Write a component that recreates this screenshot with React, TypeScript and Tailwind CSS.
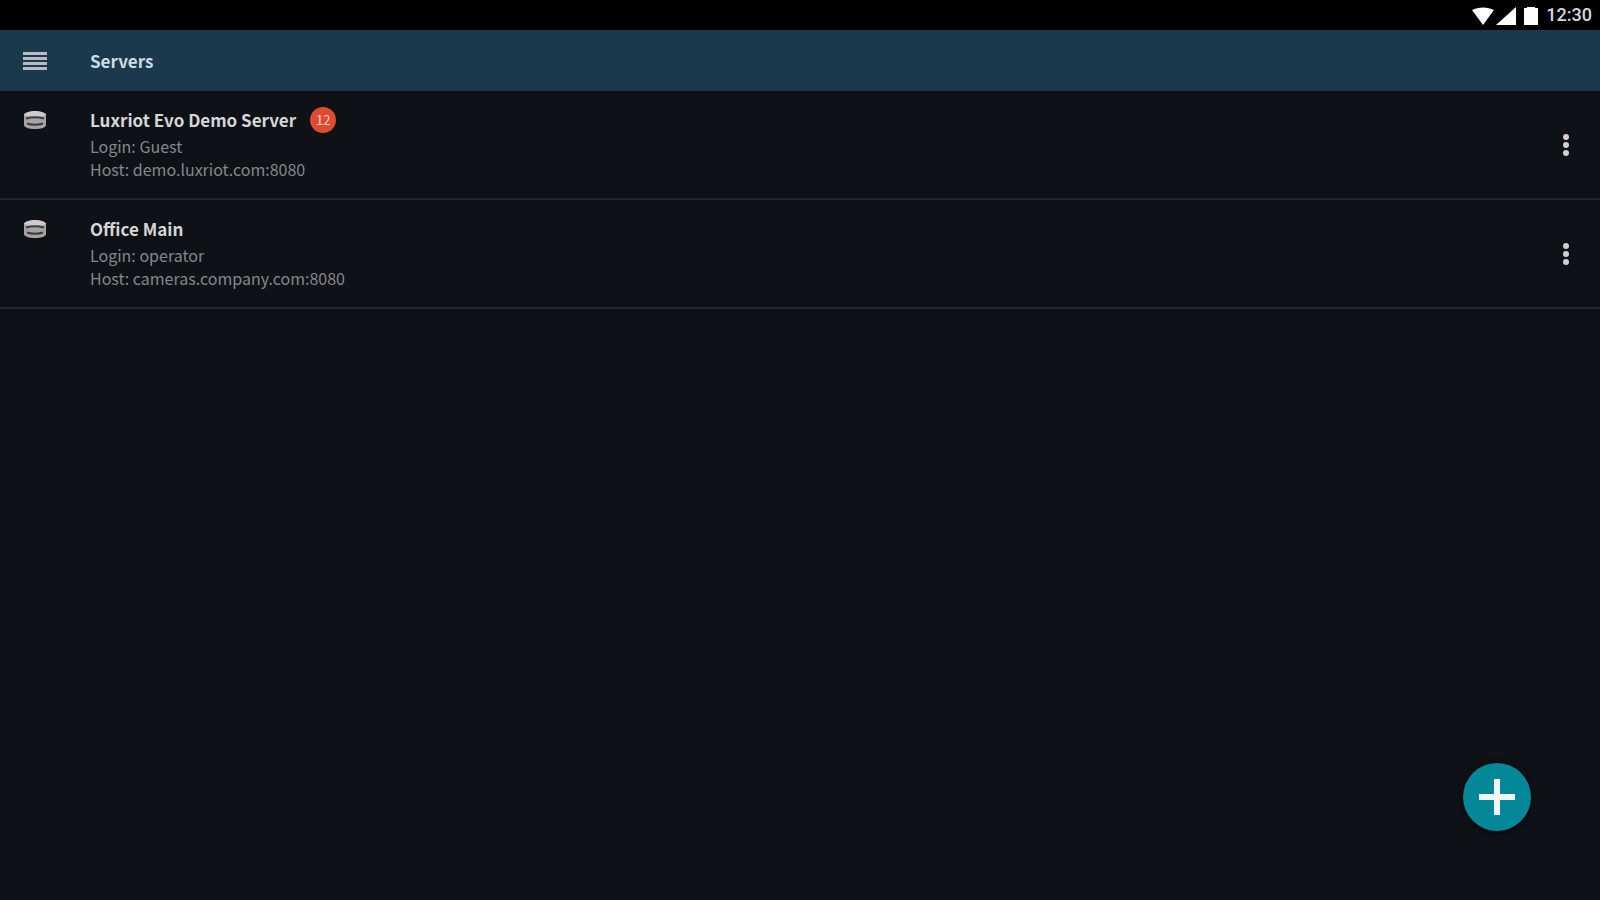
interface Server {
    id: number;
    name: string;
    login: string;
    host: string;
    alerts?: number;
}

const servers: Server[] = [
    { id: 1, name: "Luxriot Evo Demo Server", login: "Guest", host: "demo.luxriot.com:8080", alerts: 12 },
    { id: 2, name: "Office Main", login: "operator", host: "cameras.company.com:8080" },
];

const StatusBar = () => (
    <div className="flex h-[30px] items-center justify-end bg-black pr-2 text-white">
        <svg width="68" height="20" viewBox="0 0 68 20" fill="currentColor" aria-hidden="true">
            <path d="M0 5C6 1.500 16 1.500 22 5L11 20z" />
            <path d="M44 2v18H24z" />
            <path d="M52 3h3V2h8v1h3v17H52z" />
        </svg>
        <span className="ml-1.5 font-['Roboto',sans-serif] text-[18px] leading-5 font-medium text-[#d8d8d8]">12:30</span>
    </div>
);

const DatabaseIcon = () => (
    <svg width="24" height="20" viewBox="0 0 24 20" aria-hidden="true">
        <path d="M1 4v11c0 2.500 5 4 11 4s11-1.500 11-4V4z" fill="#a4a4a4" />
        <path d="M1 5c0-2 5-4 11-4s11 2 11 4c-4 2.500-18 2.500-22 0z" fill="#cccccc" />
        <path d="M3 8.500c5-1.500 13-1.500 18 0M4 13.500c4 1.500 12 1.500 16 0" fill="none" stroke="#3a3c3e" strokeWidth="2" />
    </svg>
);

const ServerRow: React.FC<{ server: Server }> = ({ server }) => {
    return (
        <li className="flex items-start border-b-2 border-[#23282b] pt-3.5 pb-[17px] pl-[23px]">
            <span className="mt-[5px] w-[67px] shrink-0">
                <DatabaseIcon />
            </span>
            <div className="min-w-0 flex-1">
                <div className="flex items-center gap-x-3.5">
                    <h2 className="text-[17px] leading-[30px] font-bold text-[#d6d6d6]">{server.name}</h2>
                    {server.alerts && (
                        <span className="flex h-[26px] w-[26px] items-center justify-center rounded-full bg-[#e04a31] text-[13px] leading-4 text-[#f6d5cf]">
                            {server.alerts}
                        </span>
                    )}
                </div>
                <p className="text-[16px] leading-[23px] text-[#858789]">Login: {server.login}</p>
                <p className="text-[16px] leading-[23px] text-[#858789]">Host: {server.host}</p>
            </div>
            <button
                type="button"
                aria-label={`Options for ${server.name}`}
                className="mr-[22px] flex w-6 shrink-0 items-center justify-center self-stretch pt-1"
            >
                <svg width="8" height="24" viewBox="0 0 8 24" fill="#cfcfcf" aria-hidden="true">
                    <circle cx="4" cy="4" r="3" />
                    <circle cx="4" cy="12" r="3" />
                    <circle cx="4" cy="20" r="3" />
                </svg>
            </button>
        </li>
    );
};

const App: React.FC = () => {
    return (
        <div className="min-h-screen bg-[#0e1216] font-['Noto_Sans_CJK_JP',sans-serif]">
            <StatusBar />
            <header className="flex h-[61px] items-center bg-[#1b394c] pl-[23px]">
                <button type="button" aria-label="Open menu" className="mr-[43px]">
                    <svg width="24" height="18" viewBox="0 0 24 18" fill="#b9b9c3" aria-hidden="true">
                        <path d="M0 0h24v3H0zM0 5h24v3H0zM0 10h24v3H0zM0 15h24v3H0z" />
                    </svg>
                </button>
                <h1 className="text-[17px] leading-7 font-bold text-[#cddbe3]">Servers</h1>
            </header>
            <main>
                <ul>
                    {servers.map((server) => (
                        <ServerRow key={server.id} server={server} />
                    ))}
                </ul>
            </main>
            <button
                type="button"
                aria-label="Add server"
                className="fixed right-[69px] bottom-[69px] flex h-[68px] w-[68px] items-center justify-center rounded-full bg-[#048799] shadow-[0_1px_5px_#000]"
            >
                <svg width="36" height="36" viewBox="0 0 36 36" fill="#f0f6f8" aria-hidden="true">
                    <path d="M15 0h6v15h15v6H21v15h-6V21H0v-6h15z" />
                </svg>
            </button>
        </div>
    );
};

export default App;
